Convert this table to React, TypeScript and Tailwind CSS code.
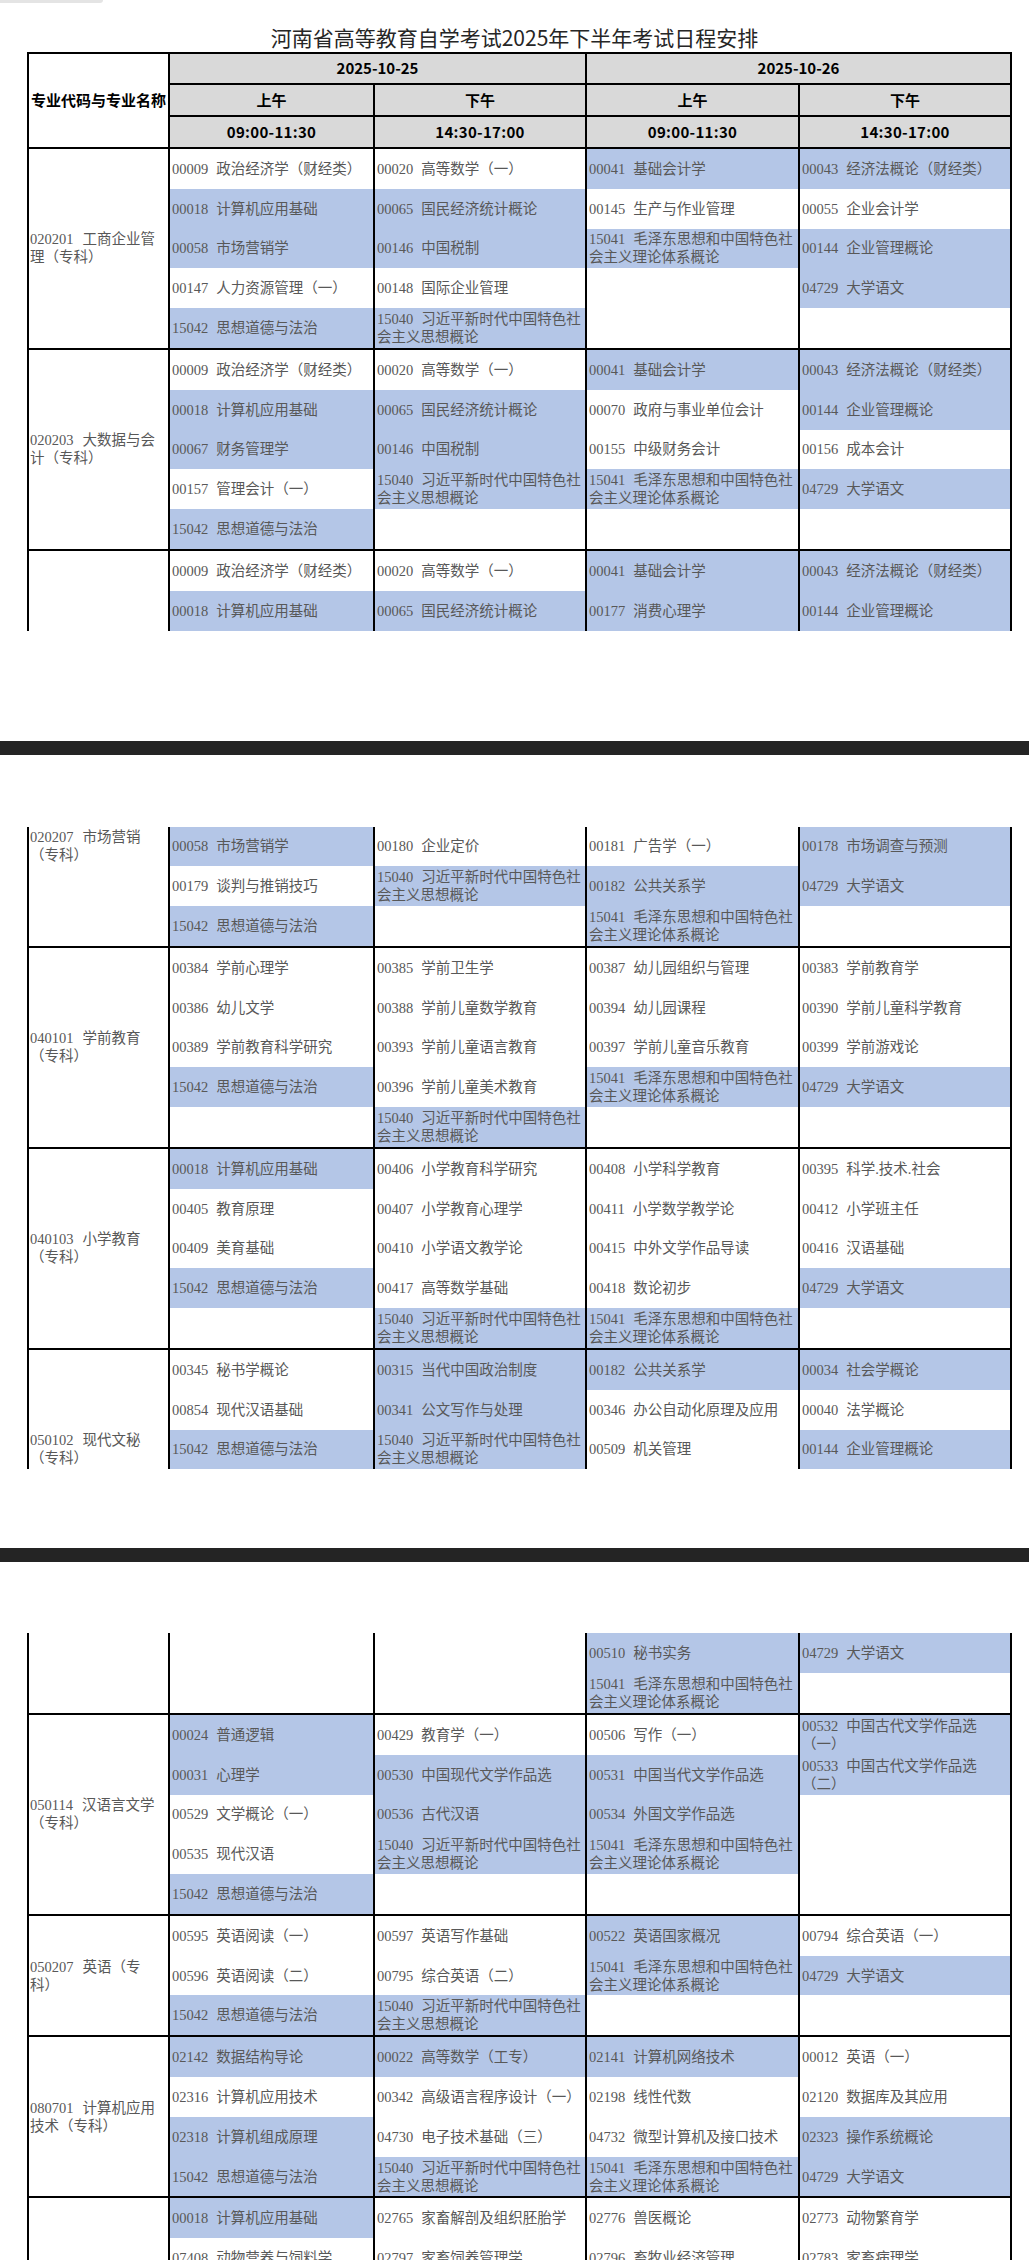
type Item = [string, string, boolean] | null;
type Block = {
  label?: [string, string];
  pos?: 'start' | 'center' | 'end';
  cols: Item[][];
};

const X15040: Item = ['15040', '习近平新时代中国特色社\n会主义思想概论', true];
const X15041: Item = ['15041', '毛泽东思想和中国特色社\n会主义理论体系概论', true];
const X15042: Item = ['15042', '思想道德与法治', true];
const X04729: Item = ['04729', '大学语文', true];

const seg1: Block[] = [
  {
    label: ['020201 工商企业管', '理（专科）'],
    cols: [
      [['00009', '政治经济学（财经类）', false], ['00018', '计算机应用基础', true], ['00058', '市场营销学', true], ['00147', '人力资源管理（一）', false], X15042],
      [['00020', '高等数学（一）', false], ['00065', '国民经济统计概论', true], ['00146', '中国税制', true], ['00148', '国际企业管理', false], X15040],
      [['00041', '基础会计学', true], ['00145', '生产与作业管理', false], X15041, null, null],
      [['00043', '经济法概论（财经类）', true], ['00055', '企业会计学', false], ['00144', '企业管理概论', true], X04729, null],
    ],
  },
  {
    label: ['020203 大数据与会', '计（专科）'],
    cols: [
      [['00009', '政治经济学（财经类）', false], ['00018', '计算机应用基础', true], ['00067', '财务管理学', true], ['00157', '管理会计（一）', false], X15042],
      [['00020', '高等数学（一）', false], ['00065', '国民经济统计概论', true], ['00146', '中国税制', true], X15040, null],
      [['00041', '基础会计学', true], ['00070', '政府与事业单位会计', false], ['00155', '中级财务会计', false], X15041, null],
      [['00043', '经济法概论（财经类）', true], ['00144', '企业管理概论', true], ['00156', '成本会计', false], X04729, null],
    ],
  },
  {
    cols: [
      [['00009', '政治经济学（财经类）', false], ['00018', '计算机应用基础', true]],
      [['00020', '高等数学（一）', false], ['00065', '国民经济统计概论', true]],
      [['00041', '基础会计学', true], ['00177', '消费心理学', true]],
      [['00043', '经济法概论（财经类）', true], ['00144', '企业管理概论', true]],
    ],
  },
];

const seg2: Block[] = [
  {
    label: ['020207 市场营销', '（专科）'],
    pos: 'start',
    cols: [
      [['00058', '市场营销学', true], ['00179', '谈判与推销技巧', false], X15042],
      [['00180', '企业定价', false], X15040, null],
      [['00181', '广告学（一）', false], ['00182', '公共关系学', true], X15041],
      [['00178', '市场调查与预测', true], X04729, null],
    ],
  },
  {
    label: ['040101 学前教育', '（专科）'],
    cols: [
      [['00384', '学前心理学', false], ['00386', '幼儿文学', false], ['00389', '学前教育科学研究', false], X15042, null],
      [['00385', '学前卫生学', false], ['00388', '学前儿童数学教育', false], ['00393', '学前儿童语言教育', false], ['00396', '学前儿童美术教育', false], X15040],
      [['00387', '幼儿园组织与管理', false], ['00394', '幼儿园课程', false], ['00397', '学前儿童音乐教育', false], X15041, null],
      [['00383', '学前教育学', false], ['00390', '学前儿童科学教育', false], ['00399', '学前游戏论', false], X04729, null],
    ],
  },
  {
    label: ['040103 小学教育', '（专科）'],
    cols: [
      [['00018', '计算机应用基础', true], ['00405', '教育原理', false], ['00409', '美育基础', false], X15042, null],
      [['00406', '小学教育科学研究', false], ['00407', '小学教育心理学', false], ['00410', '小学语文教学论', false], ['00417', '高等数学基础', false], X15040],
      [['00408', '小学科学教育', false], ['00411', '小学数学教学论', false], ['00415', '中外文学作品导读', false], ['00418', '数论初步', false], X15041],
      [['00395', '科学.技术.社会', false], ['00412', '小学班主任', false], ['00416', '汉语基础', false], X04729, null],
    ],
  },
  {
    label: ['050102 现代文秘', '（专科）'],
    pos: 'end',
    cols: [
      [['00345', '秘书学概论', false], ['00854', '现代汉语基础', false], X15042],
      [['00315', '当代中国政治制度', true], ['00341', '公文写作与处理', true], X15040],
      [['00182', '公共关系学', true], ['00346', '办公自动化原理及应用', false], ['00509', '机关管理', false]],
      [['00034', '社会学概论', true], ['00040', '法学概论', false], ['00144', '企业管理概论', true]],
    ],
  },
];

const seg3: Block[] = [
  {
    cols: [
      [null, null],
      [null, null],
      [['00510', '秘书实务', true], X15041],
      [X04729, null],
    ],
  },
  {
    label: ['050114 汉语言文学', '（专科）'],
    cols: [
      [['00024', '普通逻辑', true], ['00031', '心理学', true], ['00529', '文学概论（一）', false], ['00535', '现代汉语', false], X15042],
      [['00429', '教育学（一）', false], ['00530', '中国现代文学作品选', true], ['00536', '古代汉语', true], X15040, null],
      [['00506', '写作（一）', false], ['00531', '中国当代文学作品选', true], ['00534', '外国文学作品选', true], X15041, null],
      [['00532', '中国古代文学作品选\n（一）', true], ['00533', '中国古代文学作品选\n（二）', true], null, null, null],
    ],
  },
  {
    label: ['050207 英语（专', '科）'],
    cols: [
      [['00595', '英语阅读（一）', false], ['00596', '英语阅读（二）', false], X15042],
      [['00597', '英语写作基础', false], ['00795', '综合英语（二）', false], X15040],
      [['00522', '英语国家概况', true], X15041, null],
      [['00794', '综合英语（一）', false], X04729, null],
    ],
  },
  {
    label: ['080701 计算机应用', '技术（专科）'],
    cols: [
      [['02142', '数据结构导论', true], ['02316', '计算机应用技术', false], ['02318', '计算机组成原理', true], X15042],
      [['00022', '高等数学（工专）', true], ['00342', '高级语言程序设计（一）', false], ['04730', '电子技术基础（三）', false], X15040],
      [['02141', '计算机网络技术', true], ['02198', '线性代数', false], ['04732', '微型计算机及接口技术', false], X15041],
      [['00012', '英语（一）', false], ['02120', '数据库及其应用', false], ['02323', '操作系统概论', true], X04729],
    ],
  },
  {
    cols: [
      [['00018', '计算机应用基础', true], ['07408', '动物营养与饲料学', false], null],
      [['02765', '家畜解剖及组织胚胎学', false], ['02797', '家畜饲养管理学', false], null],
      [['02776', '兽医概论', false], ['02796', '畜牧业经济管理', false], null],
      [['02773', '动物繁育学', false], ['02783', '家畜病理学', false], null],
    ],
  },
];

function Cell({ item }: { item: Item }) {
  if (!item) return <div className="h-[39.8px] bg-white" />;
  const [code, name, blue] = item;
  const [first, second] = name.split('\n');
  return (
    <div className={`flex h-[39.8px] items-center overflow-hidden pl-[2px] ${blue ? 'bg-[#b4c6e7]' : 'bg-white'}`}>
      <div className="whitespace-nowrap leading-[18px]">
        <span>{code}</span>
        <span className="ml-[8px]">{first}</span>
        {second && (
          <>
            <br />
            {second}
          </>
        )}
      </div>
    </div>
  );
}

function BlockRow({ block }: { block: Block }) {
  const pos = block.pos ?? 'center';
  const [code, rest] = block.label ? block.label[0].split(' ') : ['', ''];
  return (
    <div className="grid grid-cols-[139px_203px_210px_211px_210px] gap-x-[2px]">
      <div
        className={`flex flex-col bg-white pl-[1px] ${
          pos === 'start' ? 'justify-start' : pos === 'end' ? 'justify-end' : 'justify-center'
        }`}
      >
        {block.label && (
          <div className="flex h-[39.8px] items-center">
            <div className="whitespace-nowrap leading-[18px]">
              <span>{code}</span>
              <span className="ml-[9px]">{rest}</span>
              <br />
              {block.label[1]}
            </div>
          </div>
        )}
      </div>
      {block.cols.map((col, i) => (
        <div key={i} className="flex flex-col">
          {col.map((item, j) => (
            <Cell key={j} item={item} />
          ))}
        </div>
      ))}
    </div>
  );
}

function Header() {
  const head = 'flex items-center justify-center bg-[#d9d9d9]';
  return (
    <div className="grid grid-cols-[139px_203px_210px_211px_210px] grid-rows-[29px_30px_30px] gap-[2px] font-['Noto_Sans_CJK_SC',sans-serif] text-[15px] font-bold text-black">
      <div className="row-span-3 flex items-center justify-center bg-white">专业代码与专业名称</div>
      <div className={`${head} col-span-2`}>2025-10-25</div>
      <div className={`${head} col-span-2`}>2025-10-26</div>
      <div className={head}>上午</div>
      <div className={head}>下午</div>
      <div className={head}>上午</div>
      <div className={head}>下午</div>
      <div className={`${head} tracking-[0.3px]`}>09:00-11:30</div>
      <div className={`${head} tracking-[0.3px]`}>14:30-17:00</div>
      <div className={`${head} tracking-[0.3px]`}>09:00-11:30</div>
      <div className={`${head} tracking-[0.3px]`}>14:30-17:00</div>
    </div>
  );
}

function Table({ blocks, top }: { blocks: Block[]; top?: boolean }) {
  return (
    <div
      className={`ml-[27px] flex w-[985px] flex-col gap-[2px] border-x-2 border-black bg-black font-['Liberation_Serif','Noto_Sans_CJK_SC',serif] text-[14.5px] text-[#585858] ${
        top ? 'border-t-2' : ''
      }`}
    >
      {top && <Header />}
      {blocks.map((b, i) => (
        <BlockRow key={i} block={b} />
      ))}
    </div>
  );
}

export default function App() {
  return (
    <div className="relative h-[2260px] w-[1029px] overflow-hidden bg-white">
      <div className="h-[3px] w-[103px] rounded-br-sm bg-[#e4e4e4]" />
      <h1 className="mt-[24px] h-[21px] text-center font-['Noto_Sans_CJK_SC',sans-serif] text-[21px] leading-[21px] font-normal text-[#262626]">
        河南省高等教育自学考试2025年下半年考试日程安排
      </h1>
      <div className="mt-[4px]">
        <Table blocks={seg1} top />
      </div>
      <div className="mt-[110px] h-[14px] bg-[#242424]" />
      <div className="mt-[72px]">
        <Table blocks={seg2} />
      </div>
      <div className="mt-[79px] h-[14px] bg-[#242424]" />
      <div className="mt-[71px]">
        <Table blocks={seg3} />
      </div>
    </div>
  );
}
